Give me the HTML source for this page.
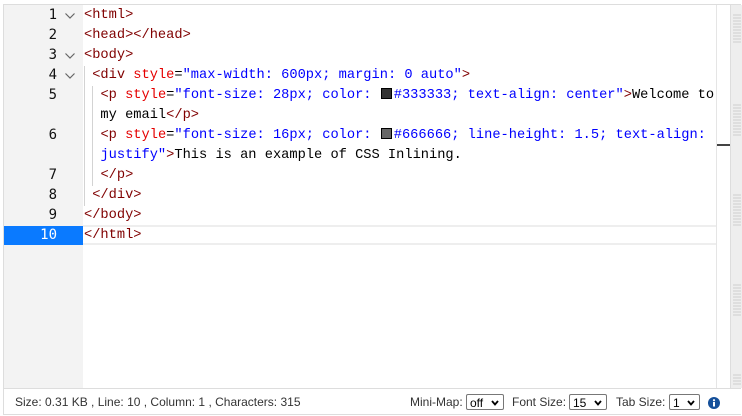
<!DOCTYPE html>
<html><head><style>
body{margin:0;width:742px;height:416px;background:#fff;overflow:hidden;position:relative;font-family:"Liberation Sans",sans-serif}
.box{position:absolute;left:3px;top:4px;width:738px;height:411px;border:1px solid #ddd;border-right:none;box-sizing:border-box}
.gut{position:absolute;left:4px;top:5px;width:79px;height:383px;background:#f3f3f3}
.ln{position:absolute;left:4px;width:53px;text-align:right;font:14px "DejaVu Sans Mono",monospace;color:#111;height:20px;line-height:19px}
.fold{position:absolute;left:65px;width:10px;height:6px}
.code{position:absolute;left:84px;font:13.7px "Liberation Mono",monospace;white-space:pre;line-height:20px;height:20px;color:#000}
.t{color:#800000}.a{color:#e50000}.v{color:#0000ff}
.sw{display:inline-block;width:9px;height:9px;border:1px solid #000;margin:0 2px 0 1px;vertical-align:-1px}
.guide{position:absolute;width:1px;background:#d3d3d3}
.status{position:absolute;left:4px;top:388px;width:737px;height:27px;border-top:1px solid #ddd;font-size:12px;color:#333;line-height:27px}
.sel{position:absolute;top:5px;border:1px solid #777;border-radius:2px;height:16px;line-height:16px;padding:0 3px;box-sizing:border-box;font-size:12px;color:#000}
.sel svg{position:absolute;right:4px;top:5px}
.lab{position:absolute;top:0}
</style></head><body>
<div class="box"></div>
<div class="gut"></div>
<div style="position:absolute;left:4px;top:226px;width:79px;height:19px;background:#0a7aff"></div>
<div style="position:absolute;left:83px;top:225px;width:633px;height:20px;border-top:2px solid #eee;border-bottom:2px solid #eee;box-sizing:border-box"></div>
<div style="position:absolute;left:716px;top:5px;width:1px;height:383px;background:#e5e5e5"></div>
<div style="position:absolute;left:717px;top:144px;width:13px;height:2px;background:#444"></div>
<div style="position:absolute;left:730px;top:5px;width:12px;height:383px;background:#eee;border-left:1px solid #ddd"></div>
<svg style="position:absolute;left:731px;top:10px" width="11" height="380">
<g stroke="#cfcfcf" stroke-width="1">
<path d="M2 5h8M2 8h8M2 11h8M2 14h8M2 17h8M2 20h8M2 23h8M2 26h8M2 29h8M2 32h8"/>
<path d="M2 95h8M2 98h8M2 101h8M2 104h8M2 107h8M2 110h8M2 113h8M2 116h8M2 119h8M2 122h8M2 125h8"/>
<path d="M2 185h8M2 188h8M2 191h8M2 194h8M2 197h8M2 200h8M2 203h8M2 206h8M2 209h8M2 212h8M2 215h8"/>
<path d="M2 275h8M2 278h8M2 281h8M2 284h8M2 287h8M2 290h8M2 293h8M2 296h8M2 299h8M2 302h8M2 305h8"/>
<path d="M2 365h8M2 368h8M2 371h8M2 374h8"/>
</g></svg>
<div class="ln" style="top:6px">1</div><div class="ln" style="top:26px">2</div><div class="ln" style="top:46px">3</div><div class="ln" style="top:66px">4</div><div class="ln" style="top:86px">5</div><div class="ln" style="top:126px">6</div><div class="ln" style="top:166px">7</div><div class="ln" style="top:186px">8</div><div class="ln" style="top:206px">9</div><div class="ln" style="top:226px;color:#fff">10</div>
<svg class="fold" style="top:13px" viewBox="0 0 10 6"><path d="M0.5 0.5L5 5L9.5 0.5" fill="none" stroke="#666" stroke-width="1.2"/></svg>
<svg class="fold" style="top:53px" viewBox="0 0 10 6"><path d="M0.5 0.5L5 5L9.5 0.5" fill="none" stroke="#666" stroke-width="1.2"/></svg>
<svg class="fold" style="top:73px" viewBox="0 0 10 6"><path d="M0.5 0.5L5 5L9.5 0.5" fill="none" stroke="#666" stroke-width="1.2"/></svg>
<div class="guide" style="left:84px;top:66px;height:140px"></div>
<div class="guide" style="left:92px;top:86px;height:100px"></div>
<div class="code" style="top:6px"><span class="t">&lt;html&gt;</span></div>
<div class="code" style="top:26px"><span class="t">&lt;head&gt;&lt;/head&gt;</span></div>
<div class="code" style="top:46px"><span class="t">&lt;body&gt;</span></div>
<div class="code" style="top:66px"> <span class="t">&lt;div</span> <span class="a">style</span>=<span class="v">"max-width: 600px; margin: 0 auto"</span><span class="t">&gt;</span></div>
<div class="code" style="top:86px">  <span class="t">&lt;p</span> <span class="a">style</span>=<span class="v">"font-size: 28px; color: <span class="sw" style="background:#333"></span>#333333; text-align: center"</span><span class="t">&gt;</span>Welcome to</div>
<div class="code" style="top:106px">  my email<span class="t">&lt;/p&gt;</span></div>
<div class="code" style="top:126px">  <span class="t">&lt;p</span> <span class="a">style</span>=<span class="v">"font-size: 16px; color: <span class="sw" style="background:#666"></span>#666666; line-height: 1.5; text-align:</span></div>
<div class="code" style="top:146px">  <span class="v">justify"</span><span class="t">&gt;</span>This is an example of CSS Inlining.</div>
<div class="code" style="top:166px">  <span class="t">&lt;/p&gt;</span></div>
<div class="code" style="top:186px"> <span class="t">&lt;/div&gt;</span></div>
<div class="code" style="top:206px"><span class="t">&lt;/body&gt;</span></div>
<div class="code" style="top:226px"><span class="t">&lt;/html&gt;</span></div>
<div class="status">
<span style="position:absolute;left:11px">Size: 0.31 KB , Line: 10 , Column: 1 , Characters: 315</span>
<span class="lab" style="left:406px">Mini-Map:</span>
<span class="sel" style="left:462px;width:38px">off<svg width="8" height="6" viewBox="0 0 8 6"><path d="M1 1L4 4.5L7 1" fill="none" stroke="#000" stroke-width="1.8"/></svg></span>
<span class="lab" style="left:508px">Font Size:</span>
<span class="sel" style="left:565px;width:38px">15<svg width="8" height="6" viewBox="0 0 8 6"><path d="M1 1L4 4.5L7 1" fill="none" stroke="#000" stroke-width="1.8"/></svg></span>
<span class="lab" style="left:612px">Tab Size:</span>
<span class="sel" style="left:665px;width:31px">1<svg width="8" height="6" viewBox="0 0 8 6"><path d="M1 1L4 4.5L7 1" fill="none" stroke="#000" stroke-width="1.8"/></svg></span>
<svg style="position:absolute;left:704px;top:8px" width="12" height="12" viewBox="0 0 12 12"><circle cx="6" cy="6" r="6" fill="#15509a"/><rect x="5" y="5" width="2" height="4.5" fill="#fff"/><circle cx="6" cy="3.2" r="1.1" fill="#fff"/></svg>
</div>
</body></html>
